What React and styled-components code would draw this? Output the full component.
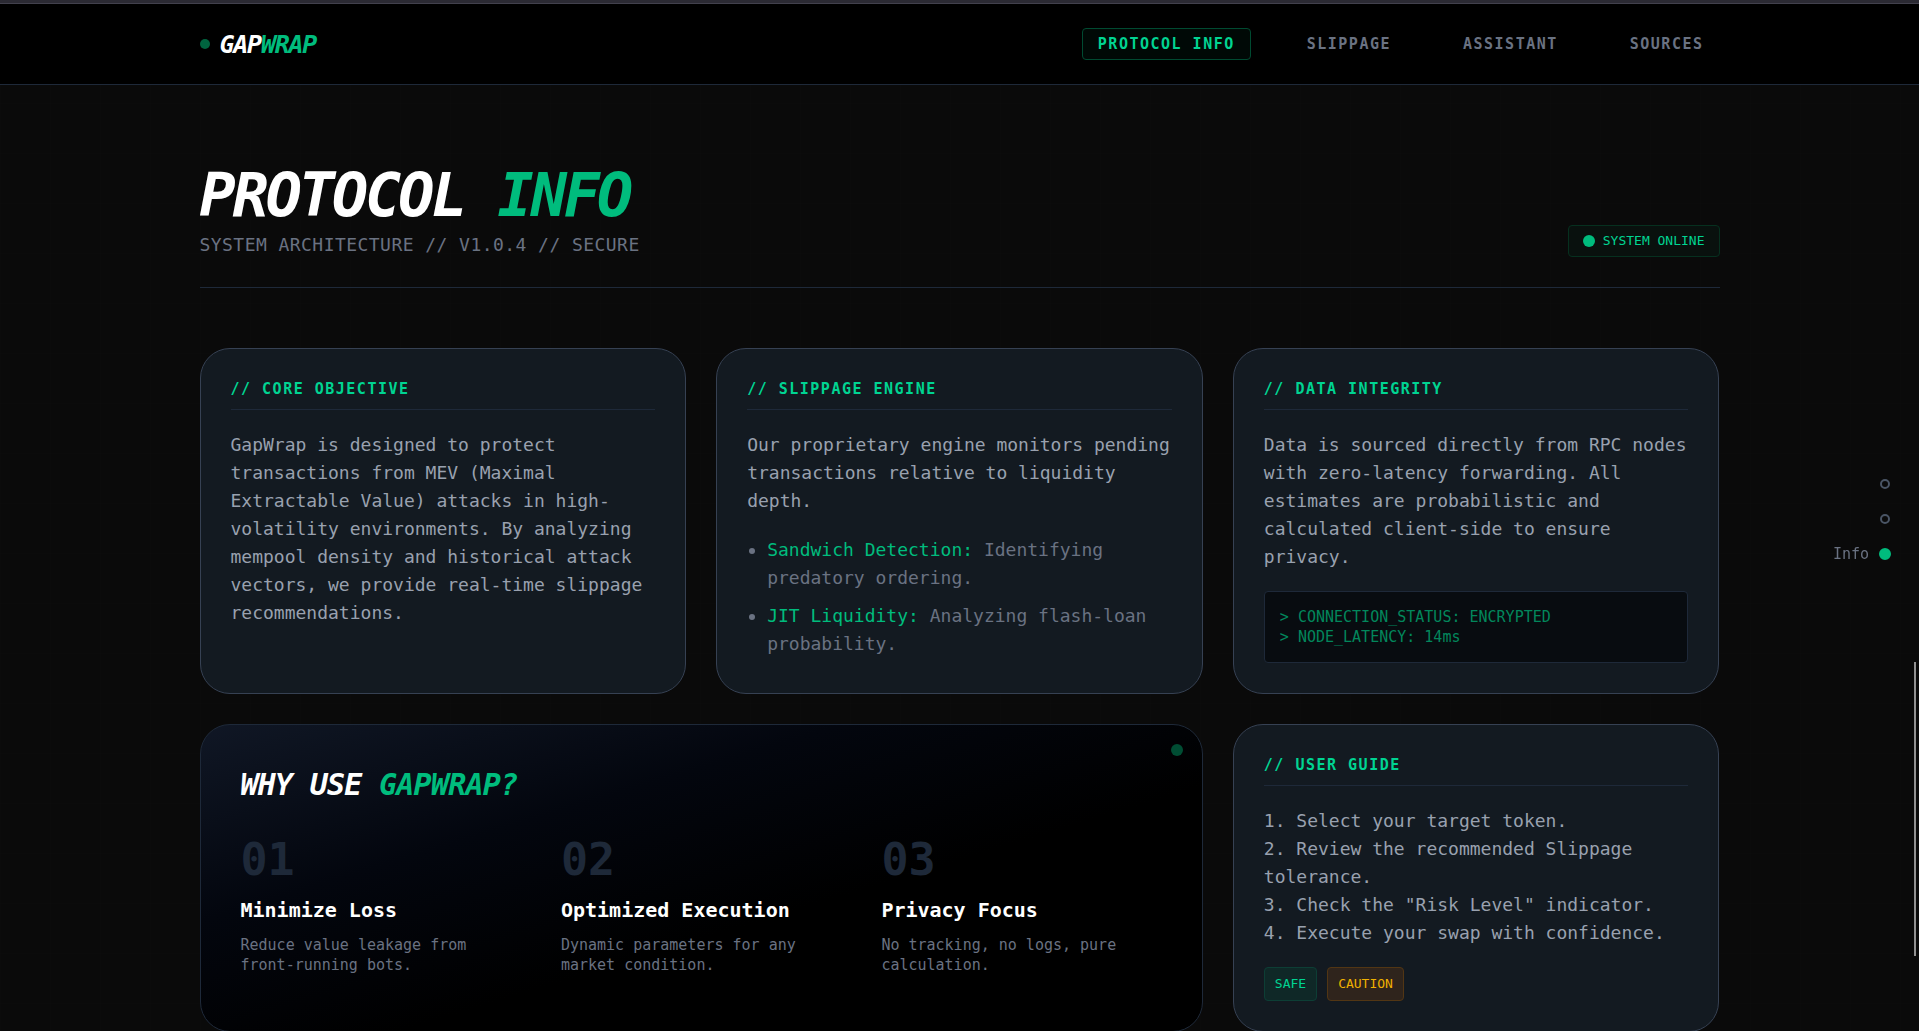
import styled, { createGlobalStyle, ThemeProvider } from 'styled-components'

const theme = {
  page: '#0a0a0a',
  panel: '#131a21',
  line: '#1e2939',
  panelLine: '#364153',
  muted: '#6a7282',
  text: '#99a1af',
  accent: '#00bc7d',
  accentLight: '#00d492',
  mono: "'DejaVu Sans Mono', 'Liberation Mono', monospace"
}

const navLinks = [
  { label: 'Protocol Info', href: '#info', active: true },
  { label: 'Slippage', href: '#slippage' },
  { label: 'Assistant', href: '#assistant' },
  { label: 'Sources', href: '#sources' }
]

const threats = [
  { name: 'Sandwich Detection:', text: 'Identifying predatory ordering.' },
  { name: 'JIT Liquidity:', text: 'Analyzing flash-loan probability.' }
]

const reasons = [
  {
    number: '01',
    title: 'Minimize Loss',
    text: 'Reduce value leakage from front-running bots.'
  },
  {
    number: '02',
    title: 'Optimized Execution',
    text: 'Dynamic parameters for any market condition.'
  },
  {
    number: '03',
    title: 'Privacy Focus',
    text: 'No tracking, no logs, pure calculation.'
  }
]

const steps = [
  'Select your target token.',
  'Review the recommended Slippage tolerance.',
  'Check the "Risk Level" indicator.',
  'Execute your swap with confidence.'
]

const sections = [
  { id: 'top', label: 'Top' },
  { id: 'slippage', label: 'Slippage' },
  { id: 'info', label: 'Info', active: true }
]

const InfoCard = ({ title, children }) => (
  <Card>
    <CardTitle>{`// ${title}`}</CardTitle>
    {children}
  </Card>
)

export default function App() {
  return (
    <ThemeProvider theme={theme}>
      <GlobalStyle />
      <Page id='top'>
        <TopStrip />

        <Header>
          <HeaderInner>
            <Logo href='#top'>
              <LogoDot />
              <span>
                GAP<Accent>WRAP</Accent>
              </span>
            </Logo>

            <Nav>
              {navLinks.map(link => (
                <NavLink
                  key={link.label}
                  href={link.href}
                  $active={link.active}
                >
                  {link.label}
                </NavLink>
              ))}
            </Nav>
          </HeaderInner>
        </Header>

        <Main id='info'>
          <Intro>
            <div>
              <Title>
                PROTOCOL <Accent>INFO</Accent>
              </Title>
              <Subtitle>{'SYSTEM ARCHITECTURE // V1.0.4 // SECURE'}</Subtitle>
            </div>
            <Status>
              <StatusDot />
              SYSTEM ONLINE
            </Status>
          </Intro>

          <CardGrid>
            <InfoCard title='CORE OBJECTIVE'>
              <Text>
                GapWrap is designed to protect transactions from MEV (Maximal
                Extractable Value) attacks in high-volatility environments. By
                analyzing mempool density and historical attack vectors, we
                provide real-time slippage recommendations.
              </Text>
            </InfoCard>

            <InfoCard title='SLIPPAGE ENGINE'>
              <Text>
                Our proprietary engine monitors pending transactions relative to
                liquidity depth.
              </Text>
              <Threats>
                {threats.map(threat => (
                  <li key={threat.name}>
                    <Accent>{threat.name}</Accent> {threat.text}
                  </li>
                ))}
              </Threats>
            </InfoCard>

            <InfoCard title='DATA INTEGRITY'>
              <Text>
                Data is sourced directly from RPC nodes with zero-latency
                forwarding. All estimates are probabilistic and calculated
                client-side to ensure privacy.
              </Text>
              <Console>
                <p>&gt; CONNECTION_STATUS: ENCRYPTED</p>
                <p>&gt; NODE_LATENCY: 14ms</p>
              </Console>
            </InfoCard>

            <WhyCard>
              <CornerDot />
              <WhyTitle>
                WHY USE <Accent>GAPWRAP?</Accent>
              </WhyTitle>
              <Reasons>
                {reasons.map(reason => (
                  <div key={reason.number}>
                    <ReasonNumber>{reason.number}</ReasonNumber>
                    <ReasonTitle>{reason.title}</ReasonTitle>
                    <ReasonText>{reason.text}</ReasonText>
                  </div>
                ))}
              </Reasons>
            </WhyCard>

            <InfoCard title='USER GUIDE'>
              <Text as='div'>
                {steps.map((step, index) => (
                  <p key={step}>{`${index + 1}. ${step}`}</p>
                ))}
              </Text>
              <Tags>
                <Tag>SAFE</Tag>
                <Tag $caution>CAUTION</Tag>
              </Tags>
            </InfoCard>
          </CardGrid>
        </Main>

        <SectionNav aria-label='Sections'>
          {sections.map(section => (
            <SectionLink
              key={section.id}
              href={`#${section.id}`}
              aria-label={section.label}
            >
              {section.active && section.label}
              <SectionMark>
                <SectionDot $active={section.active} />
              </SectionMark>
            </SectionLink>
          ))}
        </SectionNav>

        <ScrollThumb />
      </Page>
    </ThemeProvider>
  )
}

const GlobalStyle = createGlobalStyle`
  * {
    box-sizing: border-box;
    margin: 0;
    padding: 0;
  }

  html {
    scrollbar-width: none;
    background: #0a0a0a;
  }

  body {
    font-family: ${theme.mono};
    color: #fff;
  }

  a {
    color: inherit;
    text-decoration: none;
  }
`

const Page = styled.div`
  min-height: 100vh;
  background-color: ${({ theme }) => theme.page};
  background-image: linear-gradient(
      rgba(255, 255, 255, 0.005) 1px,
      transparent 1px
    ),
    linear-gradient(90deg, rgba(255, 255, 255, 0.005) 1px, transparent 1px);
  background-size: 50px 50px;
  background-position: 0 3px;
`

const TopStrip = styled.div`
  height: 4px;
  background: #2b2a33;
  border-bottom: 1px solid #42414d;
`

const Header = styled.header`
  background: #000;
  border-bottom: 1px solid ${({ theme }) => theme.line};
`

const HeaderInner = styled.div`
  display: flex;
  align-items: center;
  justify-content: space-between;
  max-width: 1600px;
  height: 80px;
  margin: 0 auto;
  padding: 0 40px;
`

const Logo = styled.a`
  display: flex;
  align-items: center;
  gap: 10px;
  font-size: 25px;
  line-height: 35px;
  font-weight: 700;
  font-style: italic;
  letter-spacing: -0.05em;
`

const Accent = styled.span`
  color: ${({ theme }) => theme.accent};
`

const LogoDot = styled.span`
  width: 10px;
  height: 10px;
  border-radius: 50%;
  background: #00643f;
`

const Nav = styled.nav`
  display: flex;
  gap: 40px;
`

const NavLink = styled.a`
  padding: 5px 15px;
  border: 1px solid ${({ $active }) => ($active ? '#004a31' : 'transparent')};
  border-radius: 4px;
  background: ${({ $active }) => ($active ? '#000906' : 'transparent')};
  color: ${({ $active, theme }) => ($active ? theme.accentLight : theme.muted)};
  font-size: 15px;
  line-height: 20px;
  font-weight: 700;
  letter-spacing: 0.1em;
  text-transform: uppercase;
`

const Main = styled.main`
  max-width: 1600px;
  margin: 0 auto;
  padding: 80px 40px 0;
`

const Intro = styled.div`
  display: flex;
  align-items: flex-end;
  justify-content: space-between;
  margin-bottom: 60px;
  padding-bottom: 30px;
  border-bottom: 1px solid ${({ theme }) => theme.line};
`

const Title = styled.h1`
  margin-bottom: 8px;
  font-size: 60px;
  line-height: 60px;
  font-weight: 700;
  font-style: italic;
  letter-spacing: -0.05em;
`

const Subtitle = styled.p`
  color: ${({ theme }) => theme.muted};
  font-size: 18px;
  line-height: 24px;
  letter-spacing: 0.025em;
`

const Status = styled.div`
  display: flex;
  align-items: center;
  gap: 8px;
  padding: 5px 14px;
  border: 1px solid #06301f;
  border-radius: 4px;
  background: #09110e;
  color: ${({ theme }) => theme.accentLight};
  font-size: 13px;
  line-height: 20px;
`

const StatusDot = styled.span`
  width: 12px;
  height: 12px;
  border-radius: 50%;
  background: ${({ theme }) => theme.accent};
`

const CardGrid = styled.div`
  display: grid;
  grid-template-columns: repeat(3, 1fr);
  gap: 30px;
`

const Card = styled.section`
  padding: 30px;
  border: 1px solid ${({ theme }) => theme.panelLine};
  border-radius: 30px;
  background: ${({ theme }) => theme.panel};
`

const CardTitle = styled.h2`
  margin-bottom: 21px;
  padding-bottom: 10px;
  border-bottom: 1px solid ${({ theme }) => theme.line};
  color: ${({ theme }) => theme.accentLight};
  font-size: 15px;
  line-height: 20px;
  font-weight: 700;
  letter-spacing: 0.1em;
`

const Text = styled.p`
  color: ${({ theme }) => theme.text};
  font-size: 18px;
  line-height: 28px;
`

const Threats = styled.ul`
  display: grid;
  gap: 10px;
  margin-top: 21px;
  padding-left: 20px;
  color: ${({ theme }) => theme.muted};
  font-size: 18px;
  line-height: 28px;
`

const Console = styled.div`
  margin-top: 20px;
  padding: 15px;
  border: 1px solid ${({ theme }) => theme.line};
  border-radius: 4px;
  background: #080c10;
  color: #02875c;
  font-size: 15px;
  line-height: 20px;
`

const WhyCard = styled.section`
  position: relative;
  grid-column: span 2;
  padding: 40px;
  border: 1px solid ${({ theme }) => theme.line};
  border-radius: 30px;
  background: linear-gradient(
    to bottom right,
    #101725,
    #03060e 32%,
    #000 60%
  );
`

const CornerDot = styled.span`
  position: absolute;
  top: 19px;
  right: 19px;
  width: 12px;
  height: 12px;
  border-radius: 50%;
  background: #004d33;
`

const WhyTitle = styled.h2`
  margin-bottom: 30px;
  font-size: 30px;
  line-height: 40px;
  font-weight: 700;
  font-style: italic;
  letter-spacing: -0.025em;
`

const Reasons = styled.div`
  display: grid;
  grid-template-columns: repeat(3, 1fr);
  gap: 40px;
`

const ReasonNumber = styled.p`
  margin-bottom: 10px;
  color: ${({ theme }) => theme.line};
  font-size: 45px;
  line-height: 50px;
  font-weight: 700;
`

const ReasonTitle = styled.h3`
  margin-bottom: 10px;
  font-size: 20px;
  line-height: 30px;
  font-weight: 700;
`

const ReasonText = styled.p`
  color: ${({ theme }) => theme.muted};
  font-size: 15px;
  line-height: 20px;
`

const Tags = styled.div`
  display: flex;
  gap: 10px;
  margin-top: 20px;
`

const Tag = styled.span`
  padding: 6px 10px;
  border: 1px solid ${({ $caution }) => ($caution ? '#523614' : '#0d3e35')};
  border-radius: 4px;
  background: ${({ $caution }) => ($caution ? '#2f241c' : '#0f2827')};
  color: ${({ $caution, theme }) => ($caution ? '#f0b100' : theme.accentLight)};
  font-size: 13px;
  line-height: 20px;
`

const SectionNav = styled.nav`
  position: fixed;
  top: 6px;
  right: 28px;
  bottom: 0;
  display: flex;
  flex-direction: column;
  align-items: flex-end;
  justify-content: center;
  gap: 15px;
`

const SectionLink = styled.a`
  display: flex;
  align-items: center;
  gap: 10px;
  height: 20px;
  color: ${({ theme }) => theme.muted};
  font-size: 15px;
  line-height: 20px;
`

const SectionMark = styled.span`
  display: flex;
  justify-content: center;
  width: 12px;
`

const SectionDot = styled.span`
  width: ${({ $active }) => ($active ? 12 : 10)}px;
  height: ${({ $active }) => ($active ? 12 : 10)}px;
  border: 2px solid
    ${({ $active, theme }) => ($active ? theme.accent : '#4a5565')};
  border-radius: 50%;
  background: ${({ $active, theme }) =>
    $active ? theme.accent : 'transparent'};
`

const ScrollThumb = styled.div`
  position: fixed;
  top: 662px;
  right: 3px;
  width: 2px;
  height: 294px;
  background: #919191;
`
